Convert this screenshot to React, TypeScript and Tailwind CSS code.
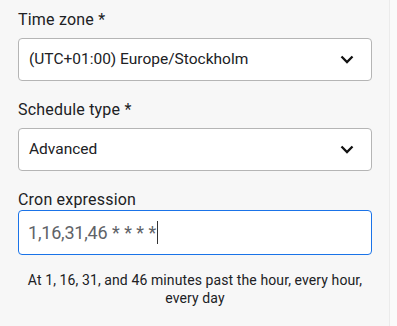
import React from "react";

function Chevron() {
  return (
    <svg width="14" height="9" viewBox="0 0 14 9" fill="none">
      <path d="M1.5 1.5 L7 7 L12.5 1.5" stroke="#111" strokeWidth="2.3" strokeLinecap="butt" strokeLinejoin="miter" />
    </svg>
  );
}

function Select({ value }: { value: string }) {
  return (
    <div className="flex h-[43px] items-center justify-between rounded-[4px] border border-[#b5b5b5] bg-white pl-[10px] pr-[17px]">
      <span className="text-[15.5px] text-[#202124]">{value}</span>
      <Chevron />
    </div>
  );
}

export default function App() {
  return (
    <div className="flex h-[326px] w-[397px] bg-[#fafafa]" style={{ fontFamily: "Roboto, 'Liberation Sans', sans-serif" }}>
      <div className="w-[390px] border-r border-[#ebebeb] bg-[#f7f7f7] pl-[18px] pr-[17px] pt-[10px]">
        <div className="text-[16px] leading-[19px] tracking-[0.2px] text-[#202124]">Time zone *</div>
        <div className="mt-[9px]">
          <Select value="(UTC+01:00) Europe/Stockholm" />
        </div>
        <div className="mt-[19px] text-[16px] leading-[19px] tracking-[0.2px] text-[#202124]">Schedule type *</div>
        <div className="mt-[9px]">
          <Select value="Advanced" />
        </div>
        <div className="mt-[19px] text-[16px] leading-[19px] tracking-[0.2px] text-[#202124]">Cron expression</div>
        <div className="mt-[1px] flex h-[45px] items-center rounded-[4px] border-[1.5px] border-[#1a73e8] bg-white pl-[9px]">
          <span className="text-[18px] text-[#5f6368]">
            <span className="tracking-[-0.2px]">1,16,31,46</span>
            <span> * * * *</span>
          </span>
          <span className="ml-[1px] h-[23px] w-[1px] bg-[#333]" />
        </div>
        <div className="mt-[17px] text-center text-[14px] leading-[17.5px] tracking-[0.1px] text-[#202124]">
          At 1, 16, 31, and 46 minutes past the hour, every hour, every day
        </div>
      </div>
    </div>
  );
}
